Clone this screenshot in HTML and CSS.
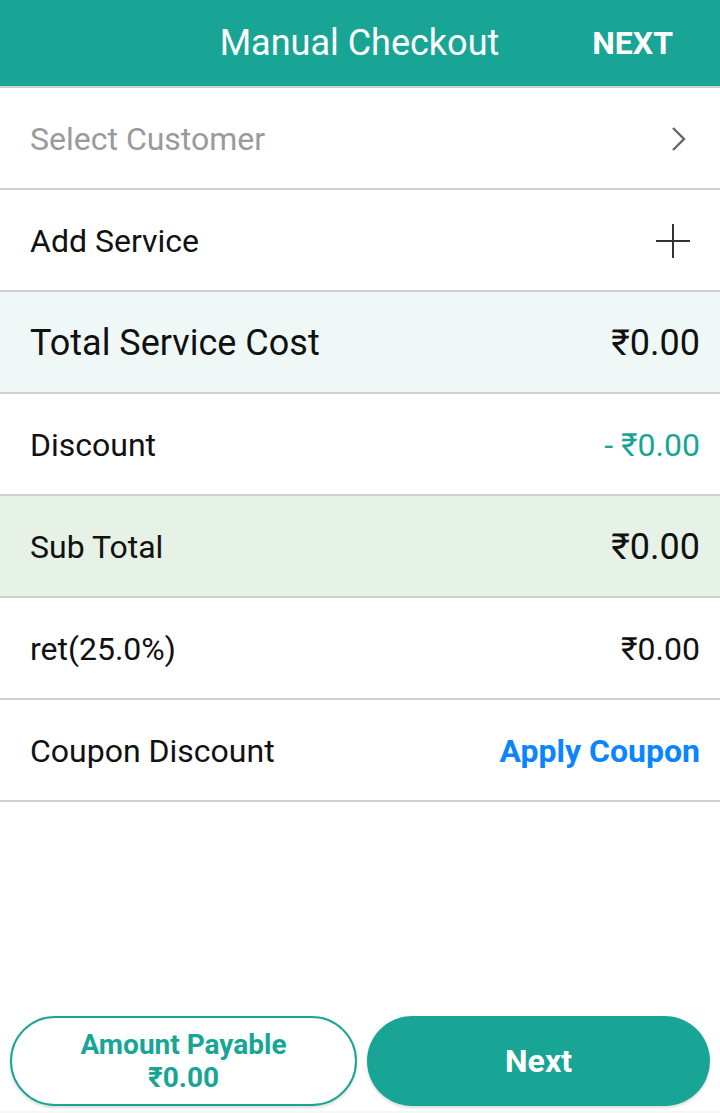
FILE: index.html
```html
<!DOCTYPE html>
<html>
<head>
<meta charset="utf-8">
<link rel="stylesheet" href="styles.css">
</head>
<body>
<div class="app">
  <header class="topbar">
    <div class="title">Manual Checkout</div>
    <div class="action">NEXT</div>
  </header>
  <div class="list">
    <div class="row">
      <span class="label muted">Select Customer</span>
      <svg class="icon" width="24" height="30" viewBox="0 0 24 30"><path d="M6 4 L17 15 L6 26" fill="none" stroke="#666" stroke-width="2.4"/></svg>
    </div>
    <div class="row">
      <span class="label">Add Service</span>
      <svg class="icon" width="36" height="36" viewBox="0 0 36 36"><path d="M1 18 H35 M18 1 V35" fill="none" stroke="#333" stroke-width="2"/></svg>
    </div>
    <div class="row total">
      <span class="label big">Total Service Cost</span>
      <span class="value big">₹0.00</span>
    </div>
    <div class="row">
      <span class="label">Discount</span>
      <span class="value teal">- ₹0.00</span>
    </div>
    <div class="row sub">
      <span class="label">Sub Total</span>
      <span class="value big">₹0.00</span>
    </div>
    <div class="row">
      <span class="label">ret(25.0%)</span>
      <span class="value">₹0.00</span>
    </div>
    <div class="row">
      <span class="label">Coupon Discount</span>
      <span class="value link">Apply Coupon</span>
    </div>
  </div>
  <div class="spacer"></div>
  <footer class="bottom">
    <div class="btn outline">
      <span>Amount Payable</span>
      <span>₹0.00</span>
    </div>
    <div class="btn filled">Next</div>
  </footer>
</div>
</body>
</html>
```
FILE: styles.css
```css
* { box-sizing: border-box; }
html, body { margin: 0; padding: 0; }
body {
  font-family: Roboto, "Noto Sans", "Liberation Sans", sans-serif;
  background: #fff;
  color: #111;
}
.app {
  width: 720px;
  height: 1113px;
  display: flex;
  flex-direction: column;
}
.topbar {
  height: 88px;
  background: #19a596;
  border-bottom: 2px solid #d0d0d0;
  display: flex;
  align-items: center;
  justify-content: flex-end;
  padding: 0 47px 0 0;
  color: #fff;
}
.title {
  font-size: 36px;
  margin-right: 93px;
}
.action {
  font-size: 32px;
  font-weight: 700;
}
.list { display: flex; flex-direction: column; }
.row {
  height: 102px;
  border-bottom: 2px solid #d0d0d0;
  display: flex;
  align-items: center;
  justify-content: space-between;
  padding: 1px 20px 0 30px;
  font-size: 32px;
}
.row .icon { margin-right: 9px; }
.muted { color: #9a9a9a; }
.big { font-size: 36px; }
.total { background: #eff8f7; }
.sub { background: #e6f2e6; }
.teal { color: #19a596; }
.link { color: #0a84ff; font-weight: 700; }
.spacer { flex: 1; }
.bottom {
  display: flex;
  gap: 10px;
  padding: 0 10px 7px 10px;
  background: linear-gradient(#fff 0, #fff 95px, #f7f7f7 95px);
}
.btn {
  flex: 1;
  height: 90px;
  border-radius: 45px;
  display: flex;
  flex-direction: column;
  align-items: center;
  justify-content: center;
  font-weight: 700;
  box-shadow: 0 2px 3px rgba(0,0,0,0.15);
}
.outline {
  border: 2px solid #19a596;
  background: #fff;
  color: #19a596;
  font-size: 28px;
  line-height: 33px;
}
.filled {
  background: #19a596;
  color: #fff;
  font-size: 32px;
}
```
